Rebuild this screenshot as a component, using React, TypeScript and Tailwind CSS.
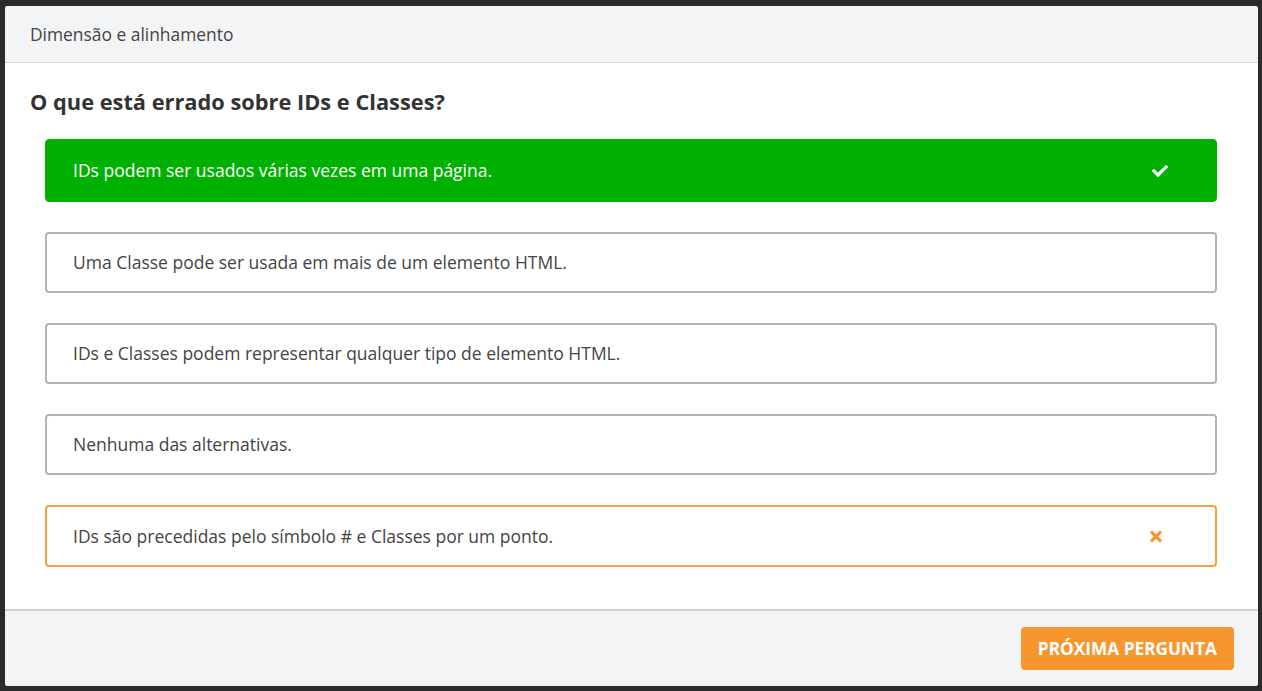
const options = [
  { text: "IDs podem ser usados várias vezes em uma página.", state: "correct" },
  { text: "Uma Classe pode ser usada em mais de um elemento HTML.", state: "idle" },
  { text: "IDs e Classes podem representar qualquer tipo de elemento HTML.", state: "idle" },
  { text: "Nenhuma das alternativas.", state: "idle" },
  { text: "IDs são precedidas pelo símbolo # e Classes por um ponto.", state: "wrong" },
];

function CheckIcon() {
  return (
    <svg viewBox="0 0 512 512" className="w-4 h-4" fill="currentColor">
      <path d="M173.898 439.404l-166.4-166.4c-9.997-9.997-9.997-26.206 0-36.204l36.203-36.204c9.997-9.998 26.207-9.998 36.204 0L192 312.69 432.095 72.596c9.997-9.997 26.207-9.997 36.204 0l36.203 36.204c9.997 9.997 9.997 26.206 0 36.204l-294.4 294.401c-9.998 9.997-26.207 9.997-36.204-.001z" />
    </svg>
  );
}

function TimesIcon() {
  return (
    <svg viewBox="0 0 352 512" className="w-[12px] h-[17px]" fill="currentColor">
      <path d="M242.72 256l100.07-100.07c12.28-12.280 12.28-32.19 0-44.48l-22.24-22.24c-12.28-12.28-32.19-12.28-44.48 0L176 189.28 75.930 89.21c-12.28-12.28-32.19-12.28-44.48 0L9.21 111.45c-12.28 12.28-12.28 32.19 0 44.48L109.28 256 9.21 356.07c-12.28 12.28-12.28 32.19 0 44.48l22.24 22.24c12.28 12.28 32.2 12.28 44.48 0L176 322.72l100.07 100.07c12.28 12.28 32.2 12.28 44.48 0l22.24-22.24c12.28-12.28 12.28-32.19 0-44.48L242.72 256z" />
    </svg>
  );
}

export default function App() {
  return (
    <div
      className="w-[1262px] h-[691px] bg-[#2b2b2b] pt-[6px] pl-[5px] pr-[4px] pb-[5px]"
      style={{ fontFamily: '"Open Sans", "Noto Sans", sans-serif' }}
    >
      <div className="h-[680px] bg-white rounded-[3px] flex flex-col overflow-hidden">
        {/* Header */}
        <div className="h-[57px] shrink-0 bg-[#f3f4f6] border-b border-[#d4d6d9] flex items-center pl-[25px] text-[17.4px] text-[#444]">
          Dimensão e alinhamento
        </div>

        {/* Body */}
        <div className="flex-1 pt-[24px]">
          <h2 className="pl-[25px] text-[21.8px] leading-[30px] font-bold text-[#333]">
            O que está errado sobre IDs e Classes?
          </h2>
          <div className="mt-[22px] pl-[40px] pr-[41px] flex flex-col gap-[30px]">
            {options.map((o) => (
              <div
                key={o.text}
                className={
                  o.state === "correct"
                    ? "h-[63px] rounded-[4px] bg-[#01b101] border border-[#01b101] text-white flex items-center justify-between pl-[27px] pr-[48px] text-[17.5px]"
                    : o.state === "wrong"
                    ? "h-[62px] rounded-[4px] bg-white border-2 border-[#f5a03f] text-[#444] flex items-center justify-between pl-[26px] pr-[53px] text-[17.5px]"
                    : "h-[61px] rounded-[4px] bg-white border-2 border-[#b0b4b9] text-[#444] flex items-center justify-between pl-[26px] pr-[53px] text-[17.5px]"
                }
              >
                <span>{o.text}</span>
                {o.state === "correct" && <CheckIcon />}
                {o.state === "wrong" && (
                  <span className="text-[#f7962f]">
                    <TimesIcon />
                  </span>
                )}
              </div>
            ))}
          </div>
        </div>

        {/* Footer */}
        <div className="h-[77px] shrink-0 bg-[#f3f4f6] border-t-2 border-[#cfd1d4] flex items-start justify-end pt-[16px] pr-[24px]">
          <button className="h-[43px] px-[17px] rounded-[4px] bg-[#f7962f] text-white font-bold text-[17.25px] uppercase">
            Próxima pergunta
          </button>
        </div>
      </div>
    </div>
  );
}
